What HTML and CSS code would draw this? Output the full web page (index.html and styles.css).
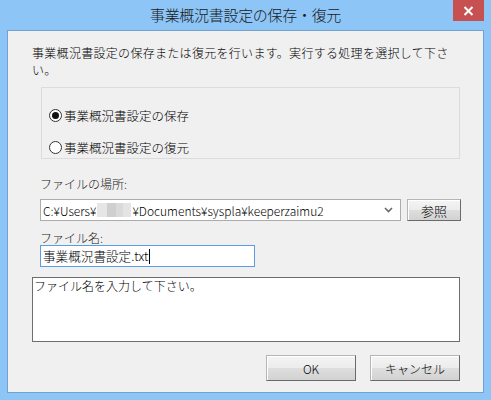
FILE: index.html
```html
<!DOCTYPE html>
<html lang="ja">
<head>
    <meta charset="UTF-8">
    <title>事業概況書設定の保存・復元</title>
    <link rel="stylesheet" href="styles.css">
</head>
<body>
    <div class="window">
        <div class="titlebar">
            <span></span>
            <div class="title">事業概況書設定の保存・復元</div>
            <div class="close">
                <svg width="11" height="10" viewBox="0 0 11 10">
                    <path d="M1.5 1 L9.5 9 M9.5 1 L1.5 9" stroke="#fff" stroke-width="2"/>
                </svg>
            </div>
        </div>

        <div class="client">
            <p class="desc">事業概況書設定の保存または復元を行います。実行する処理を選択して下さい。</p>

            <div class="group">
                <div class="radio-row">
                    <span class="radio checked"></span>
                    <span>事業概況書設定の保存</span>
                </div>
                <div class="radio-row">
                    <span class="radio"></span>
                    <span>事業概況書設定の復元</span>
                </div>
            </div>

            <div class="form">
                <div class="label first">ファイルの場所:</div>
                <div class="path-row">
                    <div class="combo">
                        <span class="combo-text">C:¥Users¥<span class="blur"></span>¥Documents¥syspla¥keeperzaimu2</span>
                        <svg class="chevron" width="9" height="6" viewBox="0 0 9 6">
                            <path d="M1 1 L4.5 4.5 L8 1" fill="none" stroke="#6a6a6a" stroke-width="1.6"/>
                        </svg>
                    </div>
                    <button class="btn browse">参照</button>
                </div>

                <div class="label">ファイル名:</div>
                <div class="textbox">事業概況書設定.txt<span class="caret"></span></div>
            </div>

            <div class="message">ファイル名を入力して下さい。</div>

            <div class="actions">
                <button class="btn">OK</button>
                <button class="btn">キャンセル</button>
            </div>
        </div>
    </div>
</body>
</html>
```

FILE: styles.css
```css
* {
    box-sizing: border-box;
}
body {
    margin: 0;
    font-family: "Noto Sans CJK JP", "Noto Sans", sans-serif;
    font-size: 12px;
    font-weight: 300;
    color: #000;
}
.window {
    width: 491px;
    height: 400px;
    background: #8cc5f6;
    display: flex;
    flex-direction: column;
}
.titlebar {
    height: 30px;
    display: grid;
    grid-template-columns: 1fr auto 1fr;
}
.title {
    font-size: 15px;
    line-height: 30px;
    color: #1a1a1a;
    letter-spacing: -0.3px;
}
.close {
    justify-self: end;
    width: 31px;
    height: 21px;
    margin-right: 7px;
    background: #c75050;
    display: flex;
    align-items: center;
    justify-content: center;
}
.client {
    margin: 0 7px;
    height: 363px;
    border: 1px solid #74a2d0;
    background: #f0f0f0;
    padding: 13px 0 0 24px;
}
.desc {
    margin: 0;
    width: 424px;
    line-height: 17px;
    letter-spacing: 0.3px;
}
.group {
    margin: 9px 0 0 9px;
    width: 419px;
    height: 72px;
    border: 1px solid #dcdcdc;
    padding: 19px 0 0 7px;
    display: flex;
    flex-direction: column;
    gap: 16px;
}
.radio-row {
    display: flex;
    align-items: center;
    gap: 2px;
    height: 16px;
    font-size: 12.5px;
}
.radio {
    width: 13px;
    height: 13px;
    border-radius: 50%;
    border: 1px solid #333;
    background: #fff;
    display: flex;
    align-items: center;
    justify-content: center;
}
.radio.checked::after {
    content: "";
    width: 7px;
    height: 7px;
    border-radius: 50%;
    background: #111;
}
.form {
    margin-left: 8px;
}
.label {
    line-height: 14px;
    margin-top: 10px;
    color: #222;
}
.label.first {
    margin-top: 18px;
}
.path-row {
    margin-top: 8px;
    display: flex;
    align-items: center;
    gap: 6px;
}
.combo {
    width: 361px;
    height: 22px;
    border: 1px solid #acacac;
    background: #fff;
    display: flex;
    align-items: center;
    justify-content: space-between;
    padding: 0 7px 0 2px;
}
.combo-text {
    display: flex;
    align-items: center;
    white-space: nowrap;
}
.blur {
    width: 34px;
    height: 14px;
    margin: 0 1px;
    background:
        linear-gradient(90deg, #e6e6e6 0 30%, #cfcfcf 30% 55%, #dadada 55% 75%, #e4e4e4 75%);
}
.btn {
    font-family: inherit;
    font-size: 12px;
    font-weight: 300;
    color: #000;
    height: 26px;
    width: 90px;
    padding: 0;
    border: 1px solid;
    border-color: #b5b5b5 #6a6a6a #6a6a6a #b5b5b5;
    background: linear-gradient(#f4f4f4, #ececec 50%, #dedede 50%, #d2d2d2);
    box-shadow: inset 1px 1px 0 #fff;
}
.btn.browse {
    width: 54px;
    height: 22px;
    font-size: 13px;
}
.textbox {
    width: 215px;
    height: 22px;
    border: 1px solid #5b9de0;
    background: #fff;
    padding-left: 2px;
    font-size: 12.6px;
    line-height: 20px;
    display: flex;
    align-items: center;
}
.caret {
    width: 1px;
    height: 15px;
    background: #000;
    margin-left: 1px;
}
.message {
    margin-top: 10px;
    width: 428px;
    height: 65px;
    border: 1px solid #6e6e6e;
    background: #fff;
    padding: 1px 1px;
    line-height: 14px;
}
.actions {
    margin-top: 13px;
    width: 428px;
    display: flex;
    justify-content: flex-end;
    gap: 14px;
}
```
